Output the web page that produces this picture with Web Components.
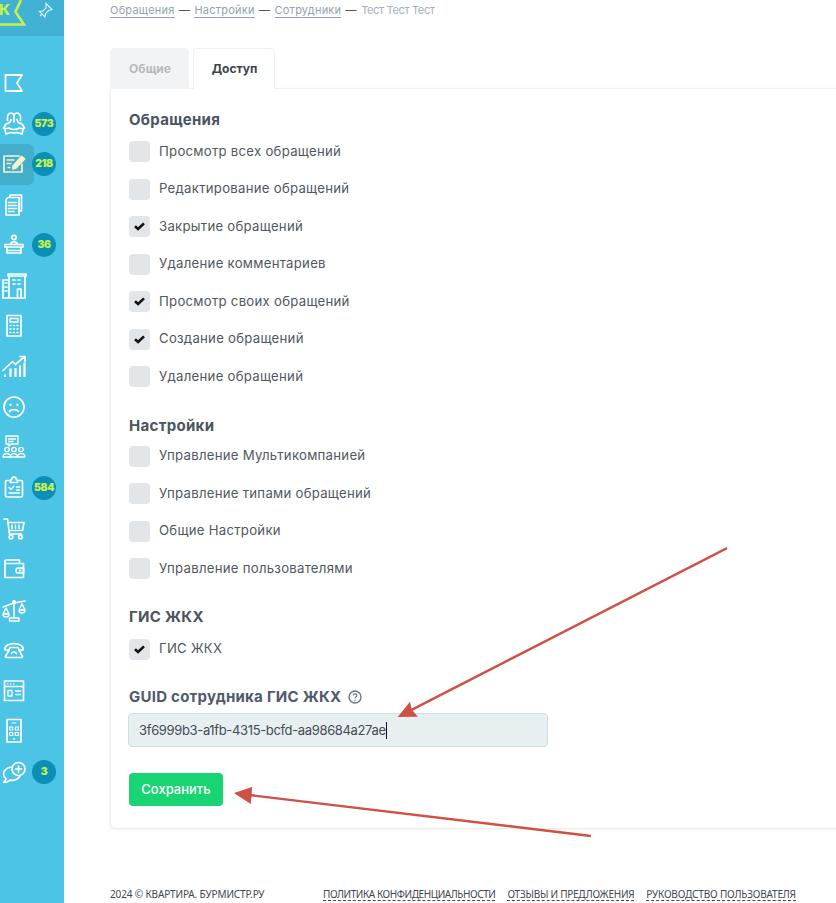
<!DOCTYPE html>
<html lang="ru"><head><meta charset="utf-8"><title>Доступ</title>
<style>
html,body{margin:0;padding:0;height:903px;overflow:hidden;background:#fff}
body{font-family:Inter,"Noto Sans",sans-serif;position:relative}
app-shell{display:flex;height:903px}
.arrows{position:absolute;left:0;top:0;width:836px;height:903px;pointer-events:none}
</style></head><body>
<template id="nav-t"><style>
:host{display:block;width:64px;height:903px;background:#4bc4e6;flex:none;overflow:hidden}
.top{height:36px;background:#41b2d4;position:relative;margin-bottom:26.75px;overflow:hidden}
.k{position:absolute;left:-1px;top:-6px;font:800 15px/32px Inter,sans-serif;color:#c5f24a}
.top svg{position:absolute;left:0;top:0}
</style><div class="top"><span class="k">К</span>
<svg width="64" height="36" viewBox="0 0 64 36" fill="none" stroke="#c5f24a" stroke-width="2.6"><path d="M0 24.500H24L15.500 12L21 0"/></svg>
<svg width="64" height="36" viewBox="0 0 64 36" fill="none" stroke="#dff4fa" stroke-width="1.1"><path d="M46 3.500L52 9.500L48.500 10.500L45.500 13.500L45 17L39.500 11.500L43 11L46 8ZM42 14L40 16"/></svg></div>
<slot></slot></template>

<template id="item-t"><style>
:host{display:flex;height:40.5px;align-items:center;position:relative}
.bg{position:absolute;left:0;top:0;width:34px;height:41px;background:#42aecb;border-radius:0 6px 6px 0;display:none}
:host([active]) .bg{display:block}
::slotted(svg){position:relative;width:30px;height:30px;flex:none;fill:none;stroke:#fff;stroke-width:1.7;stroke-linejoin:round;stroke-linecap:round}
.b{position:absolute;left:32px;top:8.25px;width:24px;height:24px;border-radius:50%;background:#0b8fb6;color:#c9f548;font:800 10.5px/24px Inter,sans-serif;text-align:center;letter-spacing:-.3px;-webkit-text-stroke:.2px #c9f548}
.b:empty{display:none}
</style><span class="bg"></span><slot></slot><span class="b" id="b"></span></template>

<template id="page-t"><style>
:host{display:block;flex:1;min-width:0;padding-left:46px;overflow:hidden;color:#4a5560}
.foot{display:flex;height:18px;margin-top:57px;align-items:center;font:10px/16px "Noto Sans",sans-serif;color:#3f4850;white-space:nowrap}
.foot .c{width:213px;letter-spacing:-.14px}
.foot a{border-bottom:1px dashed #3f4850;margin-right:12px;line-height:12px;color:inherit}
</style>
<slot name="crumbs"></slot><slot name="tabs"></slot><slot></slot>
<div class="foot"><span class="c">2024 © КВАРТИРА. БУРМИСТР.РУ</span><a style="letter-spacing:-.42px">ПОЛИТИКА КОНФИДЕНЦИАЛЬНОСТИ</a><a style="letter-spacing:-.25px">ОТЗЫВЫ И ПРЕДЛОЖЕНИЯ</a><a style="letter-spacing:-.17px">РУКОВОДСТВО ПОЛЬЗОВАТЕЛЯ</a></div>
</template>

<template id="crumbs-t"><style>
:host{display:block;height:18px;font:400 11px/20px Inter,sans-serif;color:#a3b1bb;white-space:nowrap;letter-spacing:.02em}
a{color:#93a2ad;border-bottom:1px solid #93a2ad}
i{font-style:normal;color:#555;margin:0 1px}
b{font-weight:400;letter-spacing:-.35px}
</style><a>Обращения</a> <i>—</i> <a>Настройки</a> <i>—</i> <a>Сотрудники</a> <i>—</i> <b>Тест Тест Тест</b></template>

<template id="tabs-t"><style>
:host{display:flex;gap:4px;margin-top:30px;height:41px;position:relative;z-index:1;font:700 12px/41px Inter,sans-serif}
span{display:block;text-align:center;border-radius:5px 5px 0 0;box-sizing:border-box}
.a{width:79px;background:#f2f3f5;color:#b6babe;padding-left:1px}
.b{width:82px;background:#fff;color:#3d444b;border:1px solid #eef0f1;border-bottom:0;height:41px;line-height:39px;padding-left:1px}
</style><span class="a">Общие</span><span class="b">Доступ</span></template>

<template id="card-t"><style>
:host{display:block;width:740px;box-sizing:border-box;height:740px;margin-top:-1px;padding:21px 19px 0 18px;background:#fff;border:0 solid #eef0f1;border-top-width:1px;border-left-width:1px;border-radius:0 0 5px 5px;box-shadow:0 1px 3px rgba(0,0,0,.1)}
</style><slot></slot></template>

<template id="sec-t"><style>
:host{display:block;margin-bottom:var(--mb,20px)}
h3{margin:0 0 var(--hm,3px);font:700 15px/20px Inter,sans-serif;color:#4a5560;letter-spacing:.3px}
</style><h3 id="h"></h3><slot></slot></template>

<template id="chk-t"><style>
:host{display:flex;align-items:center;height:37.5px;gap:9px;font:400 13.2px/20px Inter,sans-serif;color:#4f5860;letter-spacing:.26px}
.x{width:21px;height:21px;border-radius:4px;background:#e2e6e9;display:flex;align-items:center;justify-content:center;flex:none}
.t{padding-bottom:2px}
svg{display:none}
:host([on]) svg{display:block}
</style><span class="x"><svg width="11" height="9" viewBox="0 0 11 9" fill="none" stroke="#111" stroke-width="2.6"><path d="M1 4.200L4.100 7L10 1.400"/></svg></span><span class="t"><slot></slot></span></template>

<template id="guid-t"><style>
:host{display:block;margin-top:-1px}
.l{display:flex;align-items:center;gap:7px;font:700 15px/20px Inter,sans-serif;color:#4f5b69;letter-spacing:.25px}
.i{box-sizing:border-box;width:420px;height:34px;margin:6px 0 26px -1px;background:#e8eff1;border:1px solid #d5dde0;border-radius:4px;padding-left:10px;font:400 13px/32px Inter,sans-serif;color:#444c54;display:flex;align-items:center;letter-spacing:-.35px}
.c{width:1px;height:17px;background:#111}
button{display:block;width:94px;height:33px;border:0;border-radius:4px;background:#19d473;color:#fff;font:500 13px/33px Inter,sans-serif;padding:0}
</style><div class="l"><span>GUID сотрудника ГИС ЖКХ</span><svg width="14" height="14" viewBox="0 0 14 14" fill="none" stroke="#6a7680" stroke-width="1.4"><circle cx="7" cy="7" r="6"/><path d="M5.200 5.500C5.200 3.400 8.900 3.400 8.900 5.500C8.900 6.800 7 6.800 7 8.300" stroke-width="1.200"/><path d="M7 9.600V10.800" stroke-width="1.300"/></svg></div>
<div class="i"><span>3f6999b3-a1fb-4315-bcfd-aa98684a27ae</span><span class="c"></span></div><button>Сохранить</button></template>

<script>
function mk(tag,tid,init){customElements.define(tag,class extends HTMLElement{connectedCallback(){if(this.shadowRoot)return;const r=this.attachShadow({mode:'open'});r.appendChild(document.getElementById(tid).content.cloneNode(true));if(init)init(this,r);}});}
mk('app-shell-nav','nav-t');
mk('nav-item','item-t',(h,r)=>{r.getElementById('b').textContent=h.getAttribute('badge')||'';});
mk('app-page','page-t');mk('bread-crumbs','crumbs-t');mk('tab-bar','tabs-t');mk('form-card','card-t');
mk('form-section','sec-t',(h,r)=>{r.getElementById('h').textContent=h.getAttribute('title');h.removeAttribute('title');});
mk('check-row','chk-t');mk('guid-form','guid-t');
customElements.define('app-shell',class extends HTMLElement{connectedCallback(){if(!this.shadowRoot){const r=this.attachShadow({mode:'open'});r.innerHTML='<style>:host{display:flex;height:903px}</style><slot></slot>';}}});
</script>

<app-shell>
<app-shell-nav>
<nav-item><svg viewBox="0 0 30 30"><path d="M5.500 7H22L17 15L22 23H5.500Z" stroke-width="1.800"/></svg></nav-item>
<nav-item badge="573"><svg viewBox="0 0 30 30"><path d="M7.500 11.500C6.500 6.500 9 4 11 4C12.500 4 13.500 5 14 6.500C14.500 5 15.500 4 17 4C19 4 21.500 6.500 20.500 11.500"/><path d="M11 10.500C10.500 13 8.500 14.500 6 15L3.500 19C5 20 7 19.500 8.500 19C11 21 17 21 19.500 19C21 19.500 23 20 24.500 19L22 15C19.500 14.500 17.500 13 17 10.500"/><path d="M5 20.500L6 25C9 23.500 11 23 14 24C17 23 19 23.500 22 25L23 20.500"/><path d="M14 7V13"/></svg></nav-item>
<nav-item active badge="218"><svg viewBox="0 0 30 30" style="stroke:#f5f2cc"><path d="M22 15V23H4V7H19"/><path d="M7 11H14M7 14.500H11" stroke-width="1.400"/><path d="M13 17L21.500 7.500L24.500 10L16 19L13 20Z" fill="#f5f2cc"/><path d="M8 18.500H10" stroke-width="1.400"/></svg></nav-item>
<nav-item><svg viewBox="0 0 30 30"><path d="M10 7V5H21.500V21H19"/><path d="M8 7.500H19V25H6V9.500Z"/><path d="M8.500 12.500H16.500M8.500 15.500H16.500M8.500 18.500H16.500M8.500 21.500H14"/></svg></nav-item>
<nav-item badge="36"><svg viewBox="0 0 30 30"><circle cx="14" cy="7.500" r="2.200"/><path d="M10.500 14.500C10.500 11 17.500 11 17.500 14.500M5 14.500H23V17H5ZM7 17V23H21V17M7 20.500H21"/></svg></nav-item>
<nav-item><svg viewBox="0 0 30 30"><path d="M3 9H9V27H3ZM9 5H25V27H9ZM8 3H26V5H8Z"/><path d="M5 12H7M5 16H7M5 20H7M13 9H15M18 9H20M13 13H15M18 13H20M17.500 18H21V27M17.500 18V27" stroke-width="1.700"/></svg></nav-item>
<nav-item><svg viewBox="0 0 30 30"><path d="M7 4.500H21V25H7Z"/><path d="M10 7.500H18V11H10Z" stroke-width="1.300"/><path d="M10 14.500H11M13.500 14.500H14.500M17 14.500H18M10 18H11M13.500 18H14.500M17 18H18M10 21.500H11M13.500 21.500H14.500M17 21.500H18" stroke-width="1.500"/></svg></nav-item>
<nav-item><svg viewBox="0 0 30 30"><path d="M3 18.500L12.500 9.500L15.500 12.500L24 5M20 4.500H25V9.500" stroke-width="1.700"/><path d="M5 25V22.500M10.500 25V16.500M15.500 25V16M20 25V13.500M24.500 25V10.500" stroke-width="2.200" stroke-linecap="butt"/></svg></nav-item>
<nav-item><svg viewBox="0 0 30 30"><circle cx="14" cy="15" r="10"/><path d="M9.500 19.500C11 17 17 17 18.500 19.500" /><path d="M10.500 12.500V13M17.500 12.500V13" stroke-width="2.200"/></svg></nav-item>
<nav-item><svg viewBox="0 0 30 30" style="stroke-width:1.300"><path d="M6 3H18V11H11L9 13V11H6Z"/><path d="M8.500 6H15.500M8.500 8.500H13"/><circle cx="7" cy="16.500" r="2.200"/><circle cx="14" cy="16.500" r="2.200"/><circle cx="21" cy="16.500" r="2.200"/><path d="M3 24C3 19.500 10.500 19.500 10.500 24ZM10.500 24C10.500 19.500 17.500 19.500 17.500 24ZM17.500 24C17.500 19.500 25 19.500 25 24Z"/></svg></nav-item>
<nav-item badge="584"><svg viewBox="0 0 30 30"><path d="M10 7.500H7Q5.500 7.500 5.500 9V22.500Q5.500 24 7 24H21Q22.500 24 22.500 22.500V9Q22.500 7.500 21 7.500H18"/><path d="M10.500 9.500V7C11.500 7 12 6.500 12 5C12.500 3.800 15.500 3.800 16 5C16 6.500 16.500 7 17.500 7V9.500Z"/><path d="M9 14.500L11 16.500L14 13M16.500 14H19.500M16.500 17H19.500M9 20H19.500" stroke-width="1.300"/></svg></nav-item>
<nav-item><svg viewBox="0 0 30 30"><path d="M4 5H7.500L9.500 20H21.500"/><path d="M8 8.500H24L22.500 16.500H9.300"/><path d="M12 11V14.500M15.500 11V14.500M19 11V14.500" stroke-width="1.400"/><circle cx="11" cy="23" r="1.800"/><circle cx="20.500" cy="23" r="1.800"/></svg></nav-item>
<nav-item><svg viewBox="0 0 30 30"><path d="M5 9.500H23.500V23.500H5ZM5 9.500V7Q5 6 6 6H19.500V9.500"/><path d="M18 14H23.500V19H18Q16 19 16 16.500Q16 14 18 14Z"/><path d="M19.500 16.500H20.500" stroke-width="1.800"/></svg></nav-item>
<nav-item><svg viewBox="0 0 30 30" style="stroke-width:1.500"><path d="M14 6V23M9.500 23H19V26H9.500Z" /><path d="M3 12L14 8L25 6"/><circle cx="14" cy="7" r="1.300"/><path d="M6 13L3 19H9ZM3 19C3 23 9 23 9 19ZM22 9L19 15H25ZM19 15C19 19 25 19 25 15Z"/></svg></nav-item>
<nav-item><svg viewBox="0 0 30 30"><path d="M5 15C3 6.500 25 6.500 23 15H19L18 12.500H10L9 15Z"/><path d="M9 15L5.500 21.500Q5.500 22.500 6.500 22.500H21.500Q22.500 22.500 22.500 21.500L19 15"/><path d="M11.500 18.500C12.500 16.500 15.500 16.500 16.500 18.500"/></svg></nav-item>
<nav-item><svg viewBox="0 0 30 30"><path d="M4.500 5H23.500V24.500H4.500ZM4.500 10.500H23.500"/><path d="M7.500 7.800H8M10.500 7.800H11M13.500 7.800H14" stroke-width="1.300"/><path d="M8 14.500H12V20H8Z" stroke-width="1.300"/><path d="M15.500 15H20.500M15.500 18.500H20.500" stroke-width="1.400"/></svg></nav-item>
<nav-item><svg viewBox="0 0 30 30"><path d="M7 3.500H21V26H7Z"/><path d="M12 7H16" stroke-width="1.200"/><path d="M9.700 11H12.700V14H9.700ZM15.300 11H18.300V14H15.300ZM9.700 16.500H12.700V19.500H9.700ZM15.300 16.500H18.300V19.500H15.300Z" stroke-width="1.200"/><path d="M14 22.500V23" stroke-width="1.700"/></svg></nav-item>
<nav-item badge="3"><svg viewBox="0 0 30 30"><circle cx="18.500" cy="12" r="6.500"/><path d="M15.500 12H21.500M18.500 9V15" stroke-width="1.700"/><path d="M11.500 10C7 10.500 3.500 13.500 3.500 17C3.500 19 4.500 20.500 6 21.500C5.800 23 5 24.300 3.500 25.500C6.500 25.500 8.500 24.500 10 23.200C14 23.800 18 22 20 19"/></svg></nav-item>
</app-shell-nav>
<app-page>
<bread-crumbs slot="crumbs"></bread-crumbs>
<tab-bar slot="tabs"></tab-bar>
<form-card>
<form-section title="Обращения"><check-row>Просмотр всех обращений</check-row><check-row>Редактирование обращений</check-row><check-row on>Закрытие обращений</check-row><check-row>Удаление комментариев</check-row><check-row on>Просмотр своих обращений</check-row><check-row on>Создание обращений</check-row><check-row>Удаление обращений</check-row></form-section>
<form-section title="Настройки" style="--hm:2px;--mb:19px"><check-row>Управление Мультикомпанией</check-row><check-row>Управление типами обращений</check-row><check-row>Общие Настройки</check-row><check-row>Управление пользователями</check-row></form-section>
<form-section title="ГИС ЖКХ" style="--hm:4px"><check-row on>ГИС ЖКХ</check-row></form-section>
<guid-form></guid-form>
</form-card>
</app-page>
</app-shell>
<svg class="arrows" viewBox="0 0 836 903" fill="#cf5045" stroke="none"><path d="M726.500 547L727.500 549.200L412.600 710.700L418 716.700L397.700 717L410 701.700L411.500 708.500Z"/><path d="M591 834.800L590.700 837.200L251.500 796.500L250.700 804L234 793L252 787L251.700 794.100Z"/></svg>
</body></html>
